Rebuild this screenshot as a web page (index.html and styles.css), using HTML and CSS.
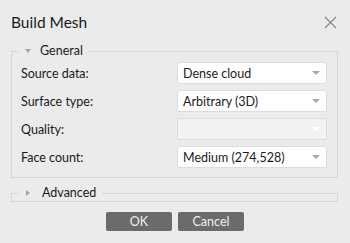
FILE: index.html
```html
<!DOCTYPE html>
<html lang="en">
<head>
    <meta charset="UTF-8">
    <title>Build Mesh</title>
    <link rel="stylesheet" href="styles.css">
</head>
<body>
    <div class="dialog">
        <div class="titlebar">
            <span class="title">Build Mesh</span>
            <svg class="close" width="13" height="13" viewBox="0 0 13 13">
                <path d="M1 1 L12 12 M12 1 L1 12" stroke="#8c8c8c" stroke-width="1.4" fill="none"/>
            </svg>
        </div>

        <fieldset class="group">
            <legend><span class="arrow-down"></span>General</legend>
            <div class="rows">
                <label>Source data:</label>
                <div class="combo"><span>Dense cloud</span><span class="caret"></span></div>

                <label>Surface type:</label>
                <div class="combo"><span>Arbitrary (3D)</span><span class="caret"></span></div>

                <label>Quality:</label>
                <div class="combo disabled"><span></span><span class="caret"></span></div>

                <label>Face count:</label>
                <div class="combo"><span>Medium (274,528)</span><span class="caret"></span></div>
            </div>
        </fieldset>

        <fieldset class="group collapsed">
            <legend><span class="arrow-right"></span>Advanced</legend>
        </fieldset>

        <div class="buttons">
            <button class="btn">OK</button>
            <button class="btn">Cancel</button>
        </div>
    </div>
</body>
</html>
```

FILE: styles.css
```css
body {
    margin: 0;
    background-color: #ebebeb;
    color: #1a1a1a;
    font-family: 'Lato', sans-serif;
    font-size: 12.5px;
}

.dialog {
    width: 350px;
    height: 243px;
    padding: 0 12px 0 11px;
    box-sizing: border-box;
}

.titlebar {
    display: flex;
    justify-content: space-between;
    align-items: center;
    height: 20px;
    padding-top: 12px;
    margin-bottom: 11px;
}

.title {
    font-size: 15.5px;
}

.close {
    margin-right: 1px;
}

/* group boxes */
.group {
    margin: 0;
    padding: 0;
    border: 1px solid #d6d6d6;
    min-width: 0;
}

.group legend {
    margin-left: 6px;
    padding: 0 6px 0 7px;
    height: 16px;
    line-height: 16px;
    display: flex;
    align-items: center;
}

.arrow-down {
    width: 0;
    height: 0;
    border-left: 3.5px solid transparent;
    border-right: 3.5px solid transparent;
    border-top: 4px solid #a6a6a6;
    margin-right: 9px;
}

.arrow-right {
    width: 0;
    height: 0;
    border-top: 3.5px solid transparent;
    border-bottom: 3.5px solid transparent;
    border-left: 4px solid #a6a6a6;
    margin: 0 12px 0 1px;
}

.rows {
    display: grid;
    grid-template-columns: 1fr 150px;
    row-gap: 6px;
    align-items: center;
    padding: 3px 10px 9px 9px;
}

.combo {
    height: 22px;
    box-sizing: border-box;
    background-color: #fff;
    border: 1px solid #dcdcdc;
    border-radius: 2px;
    display: flex;
    align-items: center;
    justify-content: space-between;
    padding: 0 6px 0 5px;
}

.combo.disabled {
    background-color: #f2f2f2;
}

.caret {
    width: 0;
    height: 0;
    border-left: 4px solid transparent;
    border-right: 4px solid transparent;
    border-top: 4px solid #a8a8a8;
}

.combo.disabled .caret {
    border-top-color: #fff;
}

.collapsed {
    margin-top: 7px;
}

.buttons {
    display: flex;
    justify-content: center;
    gap: 6px;
    margin-top: 10px;
    padding-left: 1px;
}

.btn {
    width: 66px;
    height: 19px;
    border: none;
    border-radius: 2px;
    background-color: #6b6b6b;
    color: #f0f0f0;
    font-family: 'Lato', sans-serif;
    font-size: 12.5px;
    padding: 0;
}
```
